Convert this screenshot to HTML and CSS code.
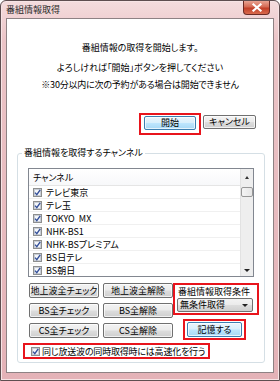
FILE: index.html
```html
<!DOCTYPE html>
<html lang="ja">
<head>
    <meta charset="UTF-8">
    <meta name="viewport" content="width=device-width, initial-scale=1.0">
    <title>番組情報取得</title>
    <link rel="stylesheet" href="styles.css">
</head>
<body>
    <div class="window">
        <!-- タイトルバー -->
        <div class="titlebar">
            <span class="title">番組情報取得</span>
            <span class="close-btn">
                <svg width="12" height="9" viewBox="0 0 12 9">
                    <path d="M2.5 1.5 L9.5 7.5 M9.5 1.5 L2.5 7.5" stroke="#fff" stroke-width="2.2" stroke-linecap="square"/>
                </svg>
            </span>
        </div>

        <div class="client">
            <!-- メッセージ -->
            <div class="message">
                <p class="msg-main">番組情報の取得を開始します。</p>
                <p>よろしければ「開始」ボタンを押してください</p>
                <p class="msg-note">※30分以内に次の予約がある場合は開始できません</p>
            </div>

            <div class="dialog-actions">
                <div class="mark start-mark">
                    <button class="btn btn-default btn-start">開始</button>
                </div>
                <button class="btn btn-cancel">キャンセル</button>
            </div>

            <!-- チャンネル選択 -->
            <fieldset class="group">
                <legend>番組情報を取得するチャンネル</legend>

                <div class="channel-list">
                    <div class="list-body">
                        <div class="list-header">チャンネル</div>
                        <div id="channelRows"></div>
                    </div>
                    <div class="scrollbar">
                        <span class="sb-arrow"><span class="tri-up"></span></span>
                        <span class="sb-thumb"></span>
                        <span class="sb-space"></span>
                        <span class="sb-arrow sb-down"><span class="tri-down"></span></span>
                    </div>
                </div>

                <div class="controls">
                    <div class="check-buttons">
                        <button class="btn">地上波全チェック</button>
                        <button class="btn">地上波全解除</button>
                        <button class="btn">BS全チェック</button>
                        <button class="btn">BS全解除</button>
                        <button class="btn">CS全チェック</button>
                        <button class="btn">CS全解除</button>
                    </div>
                    <div class="side">
                        <div class="mark cond-mark">
                            <div class="cond-label">番組情報取得条件</div>
                            <div class="combo">
                                <span>無条件取得</span>
                                <span class="tri-down"></span>
                            </div>
                        </div>
                        <div class="mark save-mark">
                            <button class="btn btn-default btn-save">記憶する</button>
                        </div>
                    </div>
                </div>

                <div class="mark fast-mark">
                    <span class="check"></span>
                    <span>同じ放送波の同時取得時には高速化を行う</span>
                </div>
            </fieldset>
        </div>
    </div>

    <script>
        // チェックボックスの図
        const checkSvg = `
            <svg width="9" height="9" viewBox="0 0 9 9">
                <rect x="0.5" y="0.5" width="8" height="8" fill="#e4e9f0" stroke="#8e8f8f"/>
                <rect x="1.5" y="1.5" width="6" height="6" fill="#f4f6f9" stroke="#c9ced6"/>
                <path d="M2 4.6 L3.8 6.6 L7.2 1.8" fill="none" stroke="#34509a" stroke-width="1.4"/>
            </svg>`;

        const channels = ['テレビ東京', 'テレ玉', 'TOKYO\u00a0\u00a0MX', 'NHK-BS1', 'NHK-BSプレミアム', 'BS日テレ', 'BS朝日'];

        document.querySelectorAll('.check').forEach(el => el.innerHTML = checkSvg);

        document.getElementById('channelRows').innerHTML = channels.map(name => `
            <div class="list-row">
                <span class="check">${checkSvg}</span>
                <span>${name}</span>
            </div>
        `).join('');
    </script>
</body>
</html>
```

FILE: styles.css
```css
body {
    margin: 0;
    font-family: "Noto Sans CJK JP", "Noto Sans", sans-serif;
    font-size: 9px;
    font-feature-settings: "palt";
    color: #000;
}
/* ウィンドウ枠 */
.window {
    width: 280px;
    height: 381px;
    box-sizing: border-box;
    border: 1px solid #5e4e50;
    border-radius: 6px 6px 0 0;
    background: linear-gradient(180deg, #f4dcdd 0%, #ebc4c7 40px, #e4b2b7 100%);
    box-shadow: inset 0 0 0 1px #f7e4e5;
    padding: 0 5px 7px;
    display: flex;
    flex-direction: column;
}
.titlebar {
    height: 17px;
    display: flex;
    justify-content: space-between;
    align-items: flex-start;
}
.title {
    line-height: 18px;
    color: #2a2a2a;
}
.close-btn {
    width: 27px;
    height: 14px;
    margin-right: 4px;
    box-sizing: border-box;
    border: 1px solid #6b2a24;
    border-top: none;
    border-radius: 0 0 4px 4px;
    background: linear-gradient(180deg, #e9a392 0%, #d46a54 45%, #c23f28 55%, #d86a4d 100%);
    display: grid;
    place-items: center;
}
.close-btn svg {
    display: block;
}
.client {
    flex: 1;
    border: 1px solid #8e8284;
    background: #fff;
    display: flex;
    flex-direction: column;
}
/* メッセージ */
.message {
    text-align: center;
    padding-top: 20px;
}
.message p {
    margin: 0;
    line-height: 17px;
}
.message .msg-main {
    margin-bottom: 3px;
}
.message .msg-note {
    letter-spacing: -0.2px;
}
/* ボタン */
.btn {
    height: 14px;
    padding: 0;
    font-family: inherit;
    font-size: 9px;
    font-feature-settings: "palt";
    line-height: 12px;
    color: #000;
    border: 1px solid #707070;
    border-radius: 2px;
    background: linear-gradient(180deg, #f3f3f3 0%, #ebebeb 48%, #dddddd 52%, #cfcfcf 100%);
    box-shadow: inset 0 0 0 1px rgba(255, 255, 255, 0.7);
    cursor: pointer;
}
.btn-default {
    border-color: #3c7fb1;
    background: linear-gradient(180deg, #eaf6fd 0%, #d9f0fc 48%, #bee6fd 52%, #a7d9f5 100%);
}
.mark {
    border: 2px solid #e8141c;
}
.dialog-actions {
    display: flex;
    justify-content: flex-end;
    align-items: flex-start;
    gap: 2px;
    margin-top: 20px;
    padding-right: 17px;
}
.start-mark {
    padding: 1px 3px 3px;
}
.btn-start {
    width: 52px;
    display: block;
}
.btn-cancel {
    width: 53px;
    margin-top: 2px;
}
/* グループ */
.group {
    margin: 11px 8px 0 10px;
    padding: 8px 10px 3px;
    border: 1px solid #d5dfe5;
    border-radius: 3px;
    min-width: 0;
}
.group legend {
    padding: 0 2px;
    margin-left: -6px;
    line-height: 14px;
}
.channel-list {
    height: 109px;
    box-sizing: border-box;
    border: 1px solid #828790;
    display: flex;
    overflow: hidden;
}
.list-body {
    flex: 1;
}
.list-header {
    height: 16px;
    line-height: 17px;
    padding-left: 4px;
    border-bottom: 1px solid #e5e5e5;
    background: linear-gradient(180deg, #ffffff 0%, #f7f8fa 100%);
}
.list-row {
    height: 13px;
    line-height: 11px;
    box-sizing: border-box;
    border-bottom: 1px solid #f0f0f0;
    display: flex;
    align-items: center;
    gap: 4px;
    padding-left: 4px;
    white-space: nowrap;
}
.list-row:last-child {
    border-bottom: none;
}
.check {
    width: 9px;
    height: 9px;
    display: block;
}
.check svg {
    display: block;
}
.scrollbar {
    width: 12px;
    background: #eeeeee;
    border-left: 1px solid #e2e2e2;
    display: flex;
    flex-direction: column;
}
.sb-arrow {
    height: 17px;
    display: grid;
    place-items: center;
}
.sb-down {
    height: 12px;
}
.sb-thumb {
    height: 10px;
    margin: 1px 0 0;
    box-sizing: border-box;
    border: 1px solid #979797;
    border-radius: 2px;
    background: linear-gradient(90deg, #f4f4f4 0%, #e6e6e6 100%);
}
.sb-space {
    flex: 1;
}
.tri-up {
    width: 0;
    height: 0;
    border-left: 2.5px solid transparent;
    border-right: 2.5px solid transparent;
    border-bottom: 3px solid #333;
}
.tri-down {
    width: 0;
    height: 0;
    border-left: 3px solid transparent;
    border-right: 3px solid transparent;
    border-top: 3px solid #222;
}
/* 操作ボタン類 */
.controls {
    display: flex;
    align-items: flex-start;
    margin-top: 6px;
    padding-left: 1px;
}
.check-buttons {
    display: grid;
    grid-template-columns: 70px 70px;
    grid-template-rows: repeat(3, 15px);
    column-gap: 4px;
    row-gap: 5px;
}
.check-buttons .btn {
    height: 15px;
}
.side {
    width: 86px;
    display: flex;
    flex-direction: column;
    align-items: flex-start;
}
.cond-mark {
    width: 86px;
    box-sizing: border-box;
    padding: 1px 2px 1px;
}
.cond-label {
    line-height: 12px;
    padding-left: 1px;
}
.combo {
    width: 76px;
    height: 14px;
    box-sizing: border-box;
    border: 1px solid #707070;
    border-radius: 2px;
    background: linear-gradient(180deg, #f3f3f3 0%, #ebebeb 48%, #dddddd 52%, #cfcfcf 100%);
    display: flex;
    align-items: center;
    justify-content: space-between;
    padding: 0 4px 0 2px;
    line-height: 12px;
}
.save-mark {
    margin: 4px 0 0 10px;
    padding: 1px 2px;
}
.btn-save {
    width: 55px;
    height: 15px;
    display: block;
}
.fast-mark {
    width: fit-content;
    height: 16px;
    box-sizing: border-box;
    margin: 3px 0 0 -5px;
    padding: 0 3px 0 6px;
    display: flex;
    align-items: center;
    gap: 2px;
    white-space: nowrap;
    letter-spacing: -0.2px;
}
```
